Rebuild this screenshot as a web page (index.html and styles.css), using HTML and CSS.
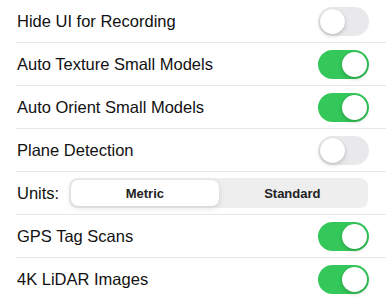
FILE: index.html
```html
<!DOCTYPE html>
<html lang="en">
<head>
    <meta charset="UTF-8">
    <meta name="viewport" content="width=device-width, initial-scale=1.0">
    <title>Scan Settings</title>
    <link rel="stylesheet" href="styles.css">
</head>
<body>
    <div class="settings">
        <div class="row">
            <span class="label">Hide UI for Recording</span>
            <div class="switch"><div class="knob"></div></div>
        </div>
        <div class="row">
            <span class="label">Auto Texture Small Models</span>
            <div class="switch on"><div class="knob"></div></div>
        </div>
        <div class="row">
            <span class="label">Auto Orient Small Models</span>
            <div class="switch on"><div class="knob"></div></div>
        </div>
        <div class="row">
            <span class="label">Plane Detection</span>
            <div class="switch"><div class="knob"></div></div>
        </div>
        <div class="row">
            <span class="label">Units:</span>
            <div class="segmented">
                <div class="segment selected">Metric</div>
                <div class="segment">Standard</div>
            </div>
        </div>
        <div class="row">
            <span class="label">GPS Tag Scans</span>
            <div class="switch on"><div class="knob"></div></div>
        </div>
        <div class="row last">
            <span class="label">4K LiDAR Images</span>
            <div class="switch on"><div class="knob"></div></div>
        </div>
    </div>
</body>
</html>
```

FILE: styles.css
```css
html, body {
    margin: 0;
    padding: 0;
    background: #ffffff;
    overflow: hidden;
}

.settings {
    padding-left: 16px;
    font-family: 'Liberation Sans', Arial, sans-serif;
}

.row {
    height: 42px;
    display: flex;
    align-items: center;
    justify-content: space-between;
    padding-right: 17px;
    border-bottom: 1px solid #e6e6e8;
}
.row.last {
    border-bottom: none;
}

.label {
    font-size: 16.5px;
    color: #111111;
    padding-left: 1px;
}

.switch {
    width: 51px;
    height: 29px;
    border-radius: 15px;
    background: #e9e9eb;
    position: relative;
    flex-shrink: 0;
}
.switch .knob {
    width: 25px;
    height: 25px;
    border-radius: 50%;
    background: #ffffff;
    position: absolute;
    top: 2px;
    left: 2px;
    box-shadow: 0 2px 4px rgba(0, 0, 0, 0.18), 0 0 1px rgba(0, 0, 0, 0.12);
}
.switch.on {
    background: #34c759;
}
.switch.on .knob {
    left: 24px;
}

.segmented {
    flex: 1;
    margin-left: 10px;
    margin-right: 1px;
    height: 30px;
    border-radius: 8px;
    background: #eeeeef;
    padding: 2px;
    box-sizing: border-box;
    display: flex;
}
.segment {
    flex: 1;
    display: flex;
    align-items: center;
    justify-content: center;
    font-size: 13px;
    font-weight: bold;
    color: #222222;
    border-radius: 7px;
}
.segment.selected {
    background: #ffffff;
    box-shadow: 0 2px 6px rgba(0, 0, 0, 0.12), 0 0 1px rgba(0, 0, 0, 0.1);
}
```
